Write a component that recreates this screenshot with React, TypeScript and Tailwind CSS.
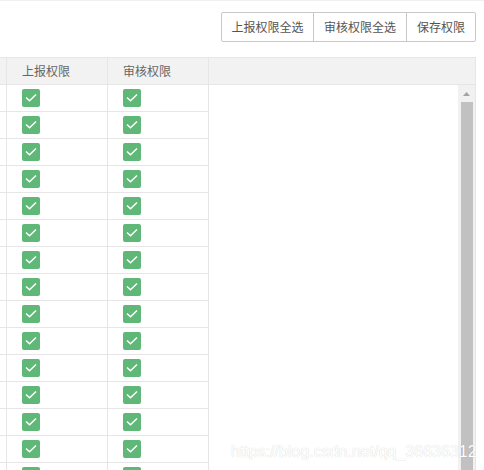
import React from 'react';

const rows = Array.from({ length: 15 }, (_, i) => i);

function Check() {
  return (
    <span className="w-[18px] h-[18px] rounded-[2px] bg-[#5fb878] flex items-center justify-center">
      <svg width="18" height="18" viewBox="0 0 18 18">
        <path d="M4 8.5 L7.5 11.8 L14 5.5" fill="none" stroke="#fff" strokeWidth="1.5" />
      </svg>
    </span>
  );
}

export default function App() {
  return (
    <div className="relative w-[484px] h-[470px] overflow-hidden bg-white border-t border-[#f0f0f0] font-['Noto_Sans_CJK_SC','Noto_Sans',sans-serif] text-[12px]">
      {/* Toolbar */}
      <div className="flex justify-end pr-[8px] pt-[11px]">
        <div className="flex h-[30px] border border-[#c9c9c9] rounded-[2px] text-[#555] bg-white">
          <button className="w-[92px] flex items-center justify-center border-r border-[#c9c9c9]">上报权限全选</button>
          <button className="w-[93px] flex items-center justify-center border-r border-[#c9c9c9]">审核权限全选</button>
          <button className="w-[68px] flex items-center justify-center">保存权限</button>
        </div>
      </div>

      {/* Table */}
      <div className="mt-[15px] w-[476px] border-t border-r border-[#e6e6e6]">
        <div className="flex h-[27px] bg-[#f2f2f2] border-b border-[#e6e6e6] text-[#666]">
          <div className="w-[7px] border-r border-[#e6e6e6]" />
          <div className="w-[101px] border-r border-[#e6e6e6] pl-[15px] flex items-center">上报权限</div>
          <div className="w-[101px] border-r border-[#e6e6e6] pl-[15px] flex items-center">审核权限</div>
          <div className="flex-1" />
        </div>
        <div className="flex h-[400px]">
          <div className="w-[209px]">
            {rows.map((r) => (
              <div key={r} className="flex h-[27px] border-b border-[#e6e6e6]">
                <div className="w-[7px] border-r border-[#e6e6e6]" />
                <div className="w-[101px] border-r border-[#e6e6e6] pl-[15px] flex items-center">
                  <Check />
                </div>
                <div className="w-[101px] border-r border-[#e6e6e6] pl-[15px] flex items-center">
                  <Check />
                </div>
              </div>
            ))}
          </div>
          <div className="flex-1" />
          {/* Scrollbar */}
          <div className="w-[17px] bg-[#f1f1f1] flex flex-col items-center pt-[7px]">
            <svg width="7" height="4" viewBox="0 0 7 4">
              <path d="M3.5 0 L7 4 L0 4 Z" fill="#a3a3a3" />
            </svg>
            <div className="mt-[6px] w-[12px] flex-1 bg-[#c1c1c1]" />
          </div>
        </div>
      </div>

      {/* Watermark */}
      <div className="absolute top-[443px] left-[231px] leading-[16px] text-[16px] font-['Liberation_Sans',Arial,sans-serif] text-white whitespace-nowrap [text-shadow:0_0_1px_rgba(0,0,0,0.22)]">
        https://blog.csdn.net/qq_36636312
      </div>
    </div>
  );
}
